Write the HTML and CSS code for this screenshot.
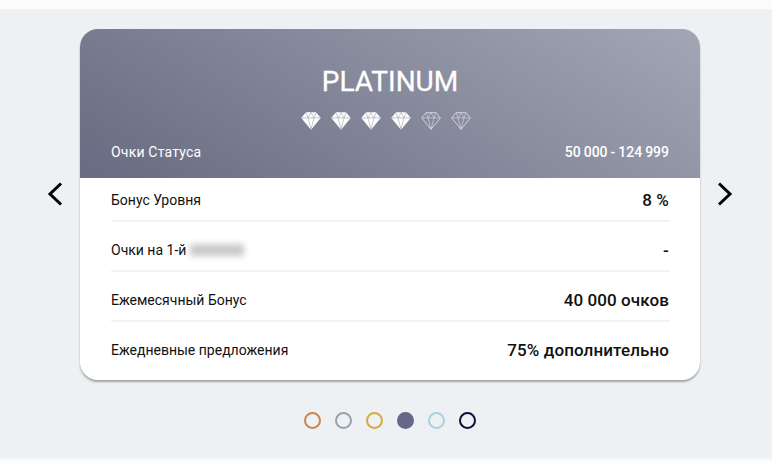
FILE: index.html
```html
<!DOCTYPE html>
<html lang="ru">

<head>
    <meta charset="UTF-8">
    <meta name="viewport" content="width=device-width, initial-scale=1.0">
    <title>Platinum</title>
    <link rel="stylesheet" href="styles.css">
</head>

<body>

    <svg class="sprite" width="0" height="0">
        <symbol id="gem" viewBox="0 0 20 18">
            <path d="M5 .7h10l4.300 5.200L10 17.300.7 5.900z" />
            <path class="facet" d="M.7 5.900h18.600M5 .7l2 5.200L10 17.300l3-11.400-3-5.200-3 5.200M15 .7l-2 5.200" />
        </symbol>
    </svg>

    <div class="top-strip"></div>

    <main class="slider">
        <div class="slider-row">
            <button class="arrow" aria-label="Previous">
                <svg width="16" height="24" viewBox="0 0 16 24"><path d="M14 1.500 3 12l11 10.500" /></svg>
            </button>

            <section class="card">
                <header class="card-head">
                    <h1>PLATINUM</h1>
                    <div class="gems">
                        <svg class="gem"><use href="#gem" /></svg>
                        <svg class="gem"><use href="#gem" /></svg>
                        <svg class="gem"><use href="#gem" /></svg>
                        <svg class="gem"><use href="#gem" /></svg>
                        <svg class="gem empty"><use href="#gem" /></svg>
                        <svg class="gem empty"><use href="#gem" /></svg>
                    </div>
                    <div class="status">
                        <span class="status-label">Очки Статуса</span>
                        <span class="status-range">50 000 - 124 999</span>
                    </div>
                </header>

                <div class="row">
                    <span class="row-label">Бонус Уровня</span>
                    <span class="row-value">8 %</span>
                </div>
                <div class="row">
                    <span class="row-label">Очки на 1-й <span class="blurred"></span></span>
                    <span class="row-value">-</span>
                </div>
                <div class="row">
                    <span class="row-label">Ежемесячный Бонус</span>
                    <span class="row-value">40 000 очков</span>
                </div>
                <div class="row">
                    <span class="row-label">Ежедневные предложения</span>
                    <span class="row-value">75% дополнительно</span>
                </div>
            </section>

            <button class="arrow" aria-label="Next">
                <svg width="16" height="24" viewBox="0 0 16 24"><path d="M2 1.500 13 12 2 22.500" /></svg>
            </button>
        </div>

        <div class="dots">
            <span class="dot bronze"></span>
            <span class="dot silver"></span>
            <span class="dot gold"></span>
            <span class="dot platinum"></span>
            <span class="dot diamond"></span>
            <span class="dot black"></span>
        </div>
    </main>

    <div class="bottom-strip"></div>

</body>

</html>
```

FILE: styles.css
```css
/* General Page Styles */
body {
    margin: 0;
    height: 461px;
    overflow: hidden;
    display: flex;
    flex-direction: column;
    background: #eef1f3;
    font-family: Roboto, sans-serif;
    color: #111;
}

.sprite {
    position: absolute;
}

.top-strip {
    height: 9px;
    background: #fbfbfb;
}

.bottom-strip {
    height: 3px;
    margin-top: auto;
    background: #f8f9f9;
}

.slider {
    width: 720px;
    margin-left: 30px;
    padding-top: 20px;
}

.slider-row {
    display: flex;
    align-items: center;
}

/* Arrows */
.arrow {
    width: 50px;
    height: 40px;
    margin-bottom: 22px;
    padding: 0;
    border: 0;
    background: none;
    display: flex;
    align-items: center;
    justify-content: center;
}

.arrow svg {
    fill: none;
    stroke: #000;
    stroke-width: 3;
}

/* Card */
.card {
    width: 620px;
    height: 351px;
    border-radius: 18px;
    overflow: hidden;
    background: #fff;
    box-shadow: 0 2px 2px rgba(0, 0, 0, 0.32);
}

.card-head {
    height: 149px;
    box-sizing: border-box;
    padding: 37px 31px 0;
    background: linear-gradient(32deg, #686b81, #a3a6b4);
    color: #fff;
    text-align: center;
}

.card-head h1 {
    margin: 0;
    font-size: 28px;
    font-weight: 400;
    line-height: 32px;
    -webkit-text-stroke: 0.3px #fff;
}

.gems {
    display: flex;
    justify-content: center;
    gap: 10px;
    margin-top: 14px;
    padding-right: 8px;
}

/* facet lines are read through the <use> by way of the variable */
.gem {
    --facet: #a9abb9;
    width: 20px;
    height: 18px;
    fill: #fff;
    stroke: #fff;
    stroke-width: 0.8;
}

.gem.empty {
    --facet: #d6d7df;
    fill: none;
    stroke: #e4e5ea;
}

.facet {
    fill: none;
    stroke: var(--facet);
    stroke-width: 0.7;
}

.status {
    display: flex;
    justify-content: space-between;
    margin-top: 13px;
    font-size: 14px;
    line-height: 18px;
}

.status-label {
    letter-spacing: 0.2px;
}

.status-range {
    font-weight: 500;
    word-spacing: -0.5px;
}

/* Rows */
.row {
    height: 50px;
    box-sizing: border-box;
    margin: 0 30px 0 31px;
    padding-top: 8px;
    border-bottom: 2px solid #f2f3f4;
    display: flex;
    justify-content: space-between;
    align-items: center;
}

.row:first-of-type {
    height: 44px;
    padding-top: 2px;
}

.row:last-child {
    border-bottom-color: transparent;
}

.row-label {
    font-size: 14px;
    display: flex;
    align-items: center;
    gap: 4px;
}

.row-value {
    font-size: 17px;
    font-weight: 500;
    letter-spacing: 0.1px;
    padding-right: 1px;
}

.blurred {
    width: 54px;
    height: 12px;
    background: #c9c9c9;
    filter: blur(3px);
}

/* Dots */
.dots {
    display: flex;
    justify-content: center;
    gap: 14px;
    margin-top: 32px;
}

.dot {
    width: 17px;
    height: 17px;
    box-sizing: border-box;
    border: 2px solid;
    border-radius: 50%;
}

.bronze { border-color: #c9864f; }
.silver { border-color: #98a2ae; }
.gold { border-color: #d9aa3b; }
.platinum { border-color: #66688a; background: #66688a; }
.diamond { border-color: #a5d3e3; }
.black { border-color: #0d0f38; }
```
